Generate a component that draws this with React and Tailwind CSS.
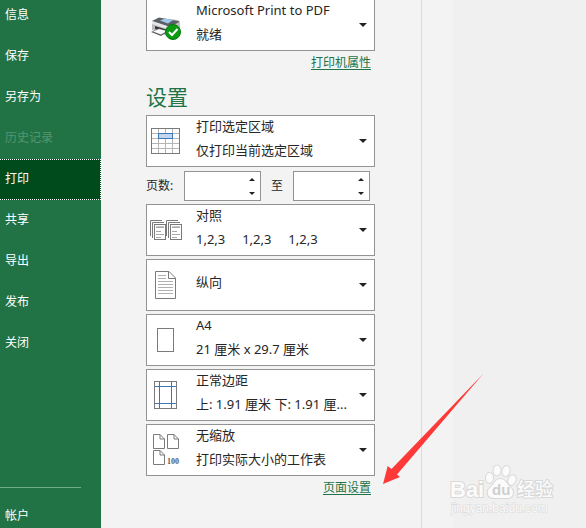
import { useState } from "react"

const NAV_ITEMS = [
    { label: "信息" },
    { label: "保存" },
    { label: "另存为" },
    { label: "历史记录", disabled: true },
    { label: "打印" },
    { label: "共享" },
    { label: "导出" },
    { label: "发布" },
    { label: "关闭" },
]

function Icon({ children }) {
    return (
        <svg
            className="w-12 h-[50px] shrink-0"
            viewBox="0 0 48 50"
            fill="none"
            stroke="#7a7a7a"
            aria-hidden="true"
        >
            {children}
        </svg>
    )
}

function PrinterIcon() {
    return (
        <Icon>
            <g stroke="none">
                <path d="M5 21L12 18L31 20L33 23V32L23 37L5 30Z" fill="#b9bcbf" />
                <path d="M5 21L12 17.500L33 21.500L23 27Z" fill="#5b6066" />
                <path d="M13 20.500L18 18.500L26 20L21 23.500Z" fill="#9fc9ee" />
                <path d="M5 21L23 27V30L5 24Z" fill="#e6e6e6" />
                <path d="M8 26L21 30V33L8 29Z" fill="#3a3a3a" />
                <path d="M4 32L12 28.500L21 31.500L14 36Z" fill="#5f5f5f" />
                <path d="M6 31.500L12 29L20 31L14 34.500Z" fill="#fafafa" />
            </g>
            <circle cx="26" cy="32" r="7.500" fill="#0b9a12" stroke="#06790c" />
            <path d="M22 32L25 35L30.500 29" stroke="#fff" strokeWidth="2" />
        </Icon>
    )
}

function GridIcon() {
    return (
        <Icon>
            <path
                d="M11.500 13V37M18.500 13V37M25.500 13V37M5 17.500H32M5 22.500H32M5 27.500H32M5 32.500H32"
                stroke="#b5b5b5"
            />
            <rect x="4.500" y="12.500" width="28" height="25" />
            <rect x="11.500" y="17.500" width="14" height="5" fill="#c3d6ec" stroke="#3a78b8" />
        </Icon>
    )
}

function CollateIcon() {
    return (
        <Icon>
            {[0, 16].map((x) => (
                <g key={x} transform={`translate(${x} 0)`}>
                    <path d="M3.500 31V15.500H15M5.500 33V17.500H17" />
                    <rect x="7.500" y="19.500" width="11" height="15" fill="#fff" />
                    <path d="M9 22.500H17M9 26.500H14M9 29.500H17M9 32.500H14" stroke="#a8a8a8" />
                    <path d="M9 21.500H17" stroke="#c8c8c8" />
                </g>
            ))}
        </Icon>
    )
}

function PortraitIcon() {
    return (
        <Icon>
            <path d="M8.500 11.500H22L28.500 18V38.500H8.500ZM21.500 11.500V18.500H28.500" />
            <path
                d="M11 15.500H19M11 18.500H19M11 21.500H26M11 24.500H26M11 27.500H26M11 30.500H26M11 33.500H26"
                stroke="#b0b0b0"
            />
        </Icon>
    )
}

function PaperIcon() {
    return (
        <Icon>
            <rect x="10.500" y="13.500" width="16" height="23" />
        </Icon>
    )
}

function MarginsIcon() {
    return (
        <Icon>
            <rect x="7.500" y="11.500" width="22" height="27" />
            <path d="M12.500 12V38M24.500 12V38M8 16.500H29M8 33.500H29" stroke="#3a78b8" />
        </Icon>
    )
}

function ScalingIcon() {
    return (
        <Icon>
            {["translate(6 9)", "translate(20 9)", "translate(6 25)"].map((t) => (
                <path
                    key={t}
                    transform={t}
                    d="M.5.5H7L11.500 5V14.500H.5ZM7 .5V5H11.500"
                />
            ))}
            <text
                x="20"
                y="39"
                fontSize="8"
                fontWeight="700"
                fontFamily="'Liberation Serif', serif"
                fill="#5a5a5a"
                stroke="none"
            >
                100
            </text>
        </Icon>
    )
}

function Dropdown({ icon, title, detail }) {
    return (
        <button
            type="button"
            aria-haspopup="listbox"
            className="flex
                items-center
                w-full
                h-[52px]
                pr-[7px]
                bg-white
                border
                border-[#939393]
                text-left
                text-[13px]
                leading-6
                text-[#262626]"
        >
            {icon}
            <span className="flex-1 min-w-0 pl-px pb-1.5">
                <span className="block">{title}</span>
                {detail && <span className="block whitespace-pre">{detail}</span>}
            </span>
            <svg className="w-2 h-1 shrink-0" viewBox="0 0 8 4" fill="#222" aria-hidden="true">
                <path d="M0 0H8L4 4Z" />
            </svg>
        </button>
    )
}

function PageSpinner({ id, label }) {
    const [value, setValue] = useState("")

    const step = (amount) => {
        setValue(String(Math.max(1, Number(value) + amount)))
    }

    return (
        <div className="flex w-[77px] h-[30px] bg-white border border-[#939393]">
            <input
                id={id}
                type="text"
                inputMode="numeric"
                aria-label={label}
                value={value}
                onChange={(e) => setValue(e.target.value)}
                className="flex-1 min-w-0 px-1 outline-none"
            />
            <div className="flex flex-col w-4">
                <button
                    type="button"
                    aria-label="增加"
                    onClick={() => step(1)}
                    className="flex flex-1 items-center justify-center"
                >
                    <svg className="w-[6px] h-[3px]" viewBox="0 0 6 3" fill="#222">
                        <path d="M0 3H6L3 0Z" />
                    </svg>
                </button>
                <button
                    type="button"
                    aria-label="减少"
                    onClick={() => step(-1)}
                    className="flex flex-1 items-center justify-center"
                >
                    <svg className="w-[6px] h-[3px]" viewBox="0 0 6 3" fill="#222">
                        <path d="M0 0H6L3 3Z" />
                    </svg>
                </button>
            </div>
        </div>
    )
}

function PaneLink({ children }) {
    return (
        <div className="pr-1 text-right text-xs leading-6">
            <a href="#" className="text-[#217346] underline underline-offset-2">
                {children}
            </a>
        </div>
    )
}

function Sidebar() {
    const [active, setActive] = useState("打印")

    return (
        <nav className="flex flex-col w-[101px] shrink-0 bg-[#217346] text-xs text-white">
            <div className="-mt-[5px]">
                {NAV_ITEMS.map(({ label, disabled }) => (
                    <button
                        key={label}
                        type="button"
                        disabled={disabled}
                        onClick={() => setActive(label)}
                        className={`block w-full h-[41px] pl-[5px] pb-px text-left
                            disabled:text-[#559670]
                            ${active === label
                                ? "bg-[#004b1c] border-y border-r border-dotted border-white"
                                : ""
                            }`}
                    >
                        {label}
                    </button>
                ))}
            </div>
            <div className="mt-auto">
                <hr className="w-[81px] border-[#6fae88]" />
                <button type="button" className="block w-full h-10 pl-[5px] pt-4 text-left">
                    帐户
                </button>
            </div>
        </nav>
    )
}

function PrintPane() {
    return (
        <main className="w-[321px] shrink-0 pl-[45px] pr-[46px] border-r border-[#dcdcdc]">
            <div className="-mt-px">
                <Dropdown
                    icon={<PrinterIcon />}
                    title="Microsoft Print to PDF"
                    detail="就绪"
                />
            </div>
            <PaneLink>打印机属性</PaneLink>
            <h2 className="mt-1 text-[21px] leading-9 text-[#217346]">设置</h2>

            <Dropdown icon={<GridIcon />} title="打印选定区域" detail="仅打印当前选定区域" />
            <div className="flex items-center pt-1 pb-[3px] text-xs text-[#262626]">
                <label htmlFor="page-from" className="w-[38px]">页数:</label>
                <PageSpinner id="page-from" label="起始页" />
                <label htmlFor="page-to" className="w-8 text-center">至</label>
                <PageSpinner id="page-to" label="结束页" />
            </div>

            <div className="flex flex-col gap-[3px]">
                <Dropdown
                    icon={<CollateIcon />}
                    title="对照"
                    detail={"1,2,3     1,2,3     1,2,3"}
                />
                <Dropdown icon={<PortraitIcon />} title="纵向" />
                <Dropdown icon={<PaperIcon />} title="A4" detail="21 厘米 x 29.7 厘米" />
                <Dropdown
                    icon={<MarginsIcon />}
                    title="正常边距"
                    detail="上: 1.91 厘米 下: 1.91 厘..."
                />
                <Dropdown icon={<ScalingIcon />} title="无缩放" detail="打印实际大小的工作表" />
            </div>
            <PaneLink>页面设置</PaneLink>
        </main>
    )
}

function Arrow() {
    return (
        <svg
            className="absolute left-[383px] top-[373px] w-[101px] h-28 pointer-events-none"
            viewBox="0 0 101 112"
            aria-hidden="true"
        >
            <path d="M0 111L4.700 93L8.500 96L100.500 .5L14 101.500L17 104Z" fill="#fd3a38" />
        </svg>
    )
}

function Watermark() {
    return (
        <svg
            className="absolute right-6 bottom-2 w-28 h-[60px] pointer-events-none"
            viewBox="0 0 112 60"
            fill="#fbfbfb"
            stroke="#d8d8d8"
            strokeWidth="2"
            paintOrder="stroke"
            fontFamily="'Liberation Sans', 'Noto Sans CJK SC', sans-serif"
            aria-hidden="true"
        >
            <text x="0" y="37" fontSize="22" fontWeight="700">Bai</text>
            <ellipse cx="39.500" cy="18" rx="3.500" ry="5" />
            <ellipse cx="47" cy="10.500" rx="3.500" ry="5" />
            <ellipse cx="56" cy="11" rx="3.500" ry="5" transform="rotate(12 56 11)" />
            <ellipse cx="62" cy="20" rx="3.500" ry="5" transform="rotate(20 62 20)" />
            <path d="M50 19C56 19 57 25 61 28C65 32 63 38 57 38H44C37 38 36 31 40 28C44 25 45 19 50 19Z" />
            <text x="42" y="35" fontSize="15" fontWeight="700" fill="#cfcfcf" stroke="none">du</text>
            <text x="67" y="36" fontSize="18" fontWeight="500">经验</text>
            <text x="1" y="52" fontSize="12" strokeWidth="1">jingyan.baidu.com</text>
        </svg>
    )
}

function App() {
    return (
        <div
            className="relative
                flex
                min-h-screen
                overflow-hidden
                bg-[#f3f3f3]
                font-['Noto_Sans','Noto_Sans_CJK_SC',sans-serif]"
        >
            <Sidebar />
            <PrintPane />
            <aside className="flex-1 ml-[31px] bg-[#f0f0f0]" />
            <Arrow />
            <Watermark />
        </div>
    )
}

export default App
